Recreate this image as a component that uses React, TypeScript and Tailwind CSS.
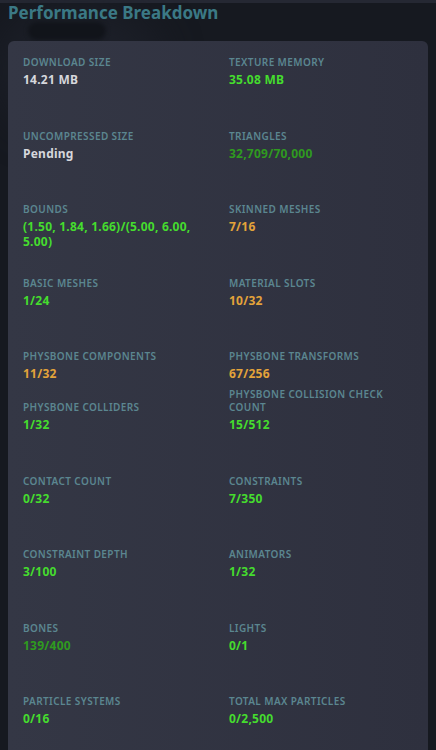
type Tone = "white" | "green" | "dark" | "orange";

type Stat = { label: string; value: string; tone: Tone };

const toneClass: Record<Tone, string> = {
  white: "text-[#d6d7dc]",
  green: "text-[#45dc2e]",
  dark: "text-[#2f9a1f]",
  orange: "text-[#e3a33a]",
};

// each row: fixed height, content at the top
const rows: { h: string; items: Stat[] }[] = [
  {
    h: "h-[74px]",
    items: [
      { label: "Download Size", value: "14.21 MB", tone: "white" },
      { label: "Texture Memory", value: "35.08 MB", tone: "green" },
    ],
  },
  {
    h: "h-[73px]",
    items: [
      { label: "Uncompressed Size", value: "Pending", tone: "white" },
      { label: "Triangles", value: "32,709/70,000", tone: "dark" },
    ],
  },
  {
    h: "h-[74px]",
    items: [
      { label: "Bounds", value: "(1.50, 1.84, 1.66)/(5.00, 6.00, 5.00)", tone: "green" },
      { label: "Skinned Meshes", value: "7/16", tone: "orange" },
    ],
  },
  {
    h: "h-[73px]",
    items: [
      { label: "Basic Meshes", value: "1/24", tone: "green" },
      { label: "Material Slots", value: "10/32", tone: "orange" },
    ],
  },
  {
    h: "h-[38px]",
    items: [
      { label: "PhysBone Components", value: "11/32", tone: "orange" },
      { label: "PhysBone Transforms", value: "67/256", tone: "orange" },
    ],
  },
  {
    h: "h-[87px]",
    items: [
      { label: "PhysBone Colliders", value: "1/32", tone: "green" },
      { label: "PhysBone Collision Check Count", value: "15/512", tone: "green" },
    ],
  },
  {
    h: "h-[73px]",
    items: [
      { label: "Contact Count", value: "0/32", tone: "green" },
      { label: "Constraints", value: "7/350", tone: "green" },
    ],
  },
  {
    h: "h-[74px]",
    items: [
      { label: "Constraint Depth", value: "3/100", tone: "green" },
      { label: "Animators", value: "1/32", tone: "green" },
    ],
  },
  {
    h: "h-[73px]",
    items: [
      { label: "Bones", value: "139/400", tone: "dark" },
      { label: "Lights", value: "0/1", tone: "green" },
    ],
  },
  {
    h: "h-[73px]",
    items: [
      { label: "Particle Systems", value: "0/16", tone: "green" },
      { label: "Total Max Particles", value: "0/2,500", tone: "green" },
    ],
  },
];

function StatCell({ stat, pushDown }: { stat: Stat; pushDown?: boolean }) {
  return (
    <div className={`flex flex-col ${pushDown ? "pt-[13px]" : ""}`}>
      <span className="text-[10px] leading-[13px] font-semibold uppercase tracking-[0.04em] text-[#5b8690]">
        {stat.label}
      </span>
      <span className={`mt-[3px] text-[12px] leading-[15px] font-bold tracking-[0.02em] ${toneClass[stat.tone]}`}>
        {stat.value}
      </span>
    </div>
  );
}

export default function App() {
  return (
    <div
      className="relative min-h-[750px] w-full overflow-hidden bg-[#161920]"
      style={{ fontFamily: '"Noto Sans", "Open Sans", sans-serif' }}
    >
      {/* top strip */}
      <div className="h-[3px] bg-[#252833]" />

      {/* Background blur shapes */}
      <div className="absolute top-[10px] left-0 w-[160px] h-[120px] rounded-full bg-[#1c1f28] blur-[20px] pointer-events-none" />
      <div className="absolute top-[22px] left-[28px] w-[78px] h-[18px] rounded-full bg-[#11141a] blur-[2px] pointer-events-none" />

      <div className="relative px-2">
        <h2 className="text-[17px] leading-[20px] font-bold text-[#3b7985]">
          Performance Breakdown
        </h2>

        <div className="mt-[18px] rounded-[6px] bg-gradient-to-r from-[#343745] to-[#2e303e] px-[15px] pt-[15px] pb-[10px]">
          {rows.map((row, ri) => (
            <div key={ri} className={`grid grid-cols-2 items-start gap-x-[22px] ${row.h}`}>
              {row.items.map((s, ci) => (
                <StatCell key={s.label} stat={s} pushDown={ri === 5 && ci === 0} />
              ))}
            </div>
          ))}
        </div>
      </div>
    </div>
  );
}
